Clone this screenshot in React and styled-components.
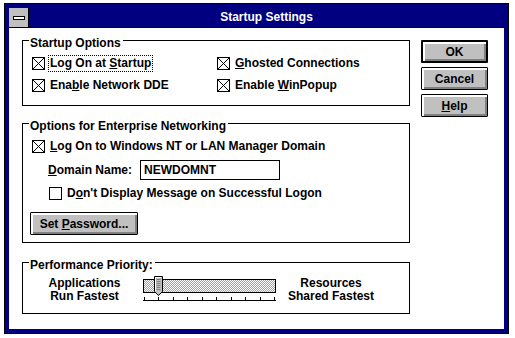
import React from 'react'
import styled, { createGlobalStyle } from 'styled-components'

const GlobalStyle = createGlobalStyle`
  body {
    margin: 0;
    background: #fff;
    font-family: "Liberation Sans", Arial, sans-serif;
    font-weight: bold;
    font-size: 12px;
    color: #000;
  }
`

const Window = styled.div`
  box-sizing: border-box;
  margin: 3px 0 0 4px;
  width: 505px;
  height: 331px;
  border: 1px solid #000;
  padding: 4px;
  background: #000080;
  display: flex;
  flex-direction: column;
`

const TitleBar = styled.div`
  display: flex;
  height: 20px;
  box-sizing: border-box;
  border-bottom: 1px solid #000;
  background: #000080;
`

const ControlBox = styled.div`
  width: 19px;
  background: #c0c0c0;
  border-right: 1px solid #000;
  display: flex;
  align-items: center;
  justify-content: center;
`

const Dash = styled.div`
  width: 10px;
  height: 2px;
  background: #fff;
  border: 1px solid #000;
`

const Title = styled.div`
  flex: 1;
  color: #fff;
  text-align: center;
  line-height: 19px;
`

const Client = styled.div`
  flex: 1;
  background: #fff;
  display: flex;
  padding: 12px 0 0 13px;
  gap: 11px;
`

const Main = styled.div`
  width: 388px;
  display: flex;
  flex-direction: column;
`

const Group = styled.div`
  position: relative;
  box-sizing: border-box;
  height: ${p => p.$h}px;
  margin-bottom: ${p => p.$mb || 0}px;
  border: 1px solid #000;
  padding: ${p => p.$pad};
`

const GroupLabel = styled.span`
  position: absolute;
  top: -4px;
  left: 6px;
  padding: 0 2px 0 1px;
  background: #fff;
  line-height: 13px;
`

const CheckGrid = styled.div`
  display: grid;
  grid-template-columns: 185px 1fr;
  row-gap: 9px;
`

const CheckRow = styled.div`
  display: flex;
  align-items: center;
  gap: 5px;
  height: 13px;
  margin-left: ${p => p.$indent || 0}px;
  margin-bottom: ${p => p.$mb || 0}px;
`

const Label = styled.span`
  line-height: 13px;
  white-space: nowrap;
  outline: ${p => (p.$focus ? '1px dotted #000' : 'none')};
  outline-offset: 1px;
`

const FieldRow = styled.div`
  display: flex;
  align-items: center;
  margin: 0 0 7px 16px;
`

const FieldLabel = styled.span`
  width: 92px;
  line-height: 13px;
`

const TextBox = styled.div`
  box-sizing: border-box;
  width: 140px;
  height: 20px;
  border: 1px solid #000;
  padding: 0 3px;
  line-height: 18px;
`

const Button = styled.button`
  box-sizing: border-box;
  width: ${p => p.$w || 67}px;
  height: ${p => p.$h || 23}px;
  font: inherit;
  color: #000;
  background: #c0c0c0;
  border: ${p => (p.$default ? 2 : 1)}px solid #000;
  border-radius: 1px;
  box-shadow: inset 1px 1px #fff, inset 2px 2px #fff, inset -1px -1px #808080, inset -2px -2px #808080;
  padding: 0;
  margin: ${p => p.$m || 0};
`

const ButtonColumn = styled.div`
  display: flex;
  flex-direction: column;
  gap: 4px;
`

const PriorityRow = styled.div`
  display: grid;
  grid-template-columns: 117px 133px 110px;
  align-items: start;
`

const Caption = styled.div`
  text-align: center;
  line-height: 13px;
`

const Slider = styled.div`
  position: relative;
  padding-top: 2px;
  height: 24px;
`

const Track = styled.div`
  box-sizing: border-box;
  height: 14px;
  border: 1px solid #000;
  background: repeating-conic-gradient(#a0a0a0 0 25%, #fff 0 50%) 0 0 / 2px 2px;
`

const Thumb = styled.svg`
  position: absolute;
  top: -1px;
  left: 11px;
`

const Ticks = styled.svg`
  display: block;
  margin-top: 4px;
`

const CheckBox = () => (
  <svg width="13" height="13" viewBox="0 0 13 13">
    <rect x="0.5" y="0.5" width="12" height="12" fill="#fff" stroke="#000" />
  </svg>
)

const CheckedBox = () => (
  <svg width="13" height="13" viewBox="0 0 13 13">
    <rect x="0.5" y="0.5" width="12" height="12" fill="#fff" stroke="#000" />
    <path d="M1 1 L12 12 M12 1 L1 12" stroke="#000" strokeWidth="1" />
  </svg>
)

const Check = ({ checked, children, focus, indent, mb }) => (
  <CheckRow $indent={indent} $mb={mb}>
    {checked ? <CheckedBox /> : <CheckBox />}
    <Label $focus={focus}>{children}</Label>
  </CheckRow>
)

const tickXs = Array.from({ length: 10 }, (_, i) => Math.round(0.5 + i * 14.55) + 0.5)

const App = () => (
  <>
    <GlobalStyle />
    <Window>
      <TitleBar>
        <ControlBox>
          <Dash />
        </ControlBox>
        <Title>Startup Settings</Title>
      </TitleBar>
      <Client>
        <Main>
          <Group $h={66} $mb={17} $pad="16px 0 0 9px">
            <GroupLabel>Startup Options</GroupLabel>
            <CheckGrid>
              <Check checked focus>
                Log On at <u>S</u>tartup
              </Check>
              <Check checked>
                <u>G</u>hosted Connections
              </Check>
              <Check checked>
                Ena<u>b</u>le Network DDE
              </Check>
              <Check checked>
                Enable <u>W</u>inPopup
              </Check>
            </CheckGrid>
          </Group>

          <Group $h={120} $mb={19} $pad="16px 0 0 9px">
            <GroupLabel>Options for Enterprise Networking</GroupLabel>
            <Check checked mb={7}>
              <u>L</u>og On to Windows NT or LAN Manager Domain
            </Check>
            <FieldRow>
              <FieldLabel>
                <u>D</u>omain Name:
              </FieldLabel>
              <TextBox>NEWDOMNT</TextBox>
            </FieldRow>
            <Check indent={17} mb={12}>
              D<u>o</u>n't Display Message on Successful Logon
            </Check>
            <Button $w={108} $h={23} $m="0 0 0 -2px">
              Set <u>P</u>assword...
            </Button>
          </Group>

          <Group $h={52} $pad="14px 0 0 3px">
            <GroupLabel>Performance Priority:</GroupLabel>
            <PriorityRow>
              <Caption>
                Applications
                <br />
                Run Fastest
              </Caption>
              <Slider>
                <Track />
                <Thumb width="9" height="20" viewBox="0 0 9 20">
                  <path d="M0.5 0.5 H8.5 V15.5 L4.5 19.5 L0.5 15.5 Z" fill="#c0c0c0" stroke="#000" />
                  <path d="M1.5 1.5 H7.5" stroke="#fff" />
                  <path d="M1.5 1.5 V15" stroke="#fff" />
                  {[3, 5, 7, 9, 11, 13].map(y => (
                    <path key={y} d={`M2.5 ${y + 0.5} H6.5`} stroke="#808080" />
                  ))}
                </Thumb>
                <Ticks width="133" height="4" viewBox="0 0 133 4">
                  <path d="M0 3.5 H133" stroke="#000" />
                  {tickXs.map(x => (
                    <path key={x} d={`M${x} 0 V4`} stroke="#000" />
                  ))}
                </Ticks>
              </Slider>
              <Caption>
                Resources
                <br />
                Shared Fastest
              </Caption>
            </PriorityRow>
          </Group>
        </Main>

        <ButtonColumn>
          <Button $default>OK</Button>
          <Button>Cancel</Button>
          <Button>
            <u>H</u>elp
          </Button>
        </ButtonColumn>
      </Client>
    </Window>
  </>
)

export default App
